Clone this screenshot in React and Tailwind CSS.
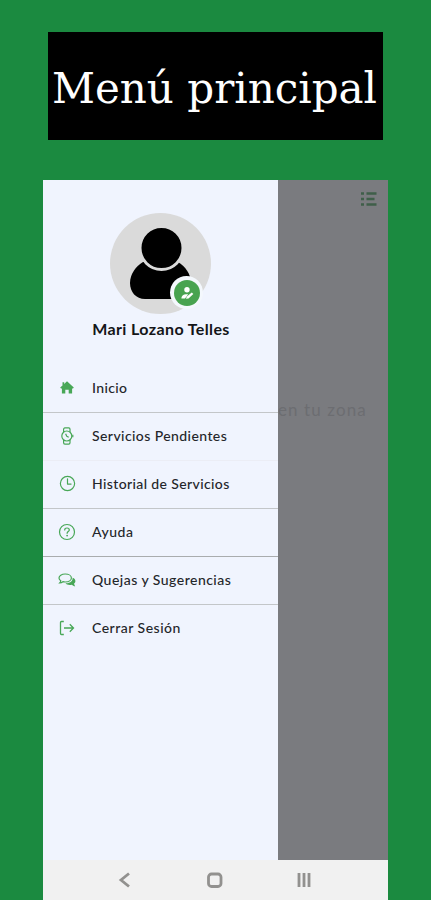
import { IoTimeOutline } from 'react-icons/io5'

const HomeIcon = () => (
  <svg viewBox="0 0 14 13" className="h-[13px] w-3.5" fill="currentColor">
    <path d="M7 .3 13.800 6.600 13 7.500h-.9v5H8.700V8.700H5.300v3.800H1.900v-5H1L.2 6.600 2.500 4.500V1.300h1.700v1.600z" />
  </svg>
)

const WatchIcon = () => (
  <svg viewBox="0 0 14 18" className="h-[18px] w-3.5" fill="none" stroke="currentColor" strokeWidth="1.2" strokeLinejoin="round">
    <circle cx="6.800" cy="9" r="5" />
    <path d="M3.600 5V2.300c0-.8.500-1.400 1.300-1.400h3.800c.8 0 1.300.6 1.300 1.400V5M3.600 13v2.700c0 .8.500 1.400 1.300 1.400h3.800c.8 0 1.300-.6 1.300-1.400V13M12.800 7.800v2.400" />
    <path d="M5.600 6.800 6.800 9.300l1.900 1" />
  </svg>
)

const HelpIcon = () => (
  <svg viewBox="0 0 18 18" className="size-[18px]" fill="none" stroke="currentColor" strokeWidth="1.2">
    <circle cx="9" cy="9" r="7.500" />
    <path d="M6.700 7c0-1.300 1-2 2.300-2s2.300.8 2.300 2c0 1.500-2.200 1.700-2.200 3.300" strokeLinecap="round" />
    <circle cx="9.100" cy="12.600" r=".9" fill="currentColor" stroke="none" />
  </svg>
)

const ChatIcon = () => (
  <svg viewBox="0 0 18 16" className="w-[18px] h-4" fill="none" stroke="currentColor" strokeWidth="1.2">
    <path d="M7.200 2c3.600 0 6.200 1.700 6.200 4s-2.600 4-6.200 4c-.8 0-1.600-.1-2.300-.3-.8.700-1.900 1.200-3.200 1.200.6-.6 1-1.300 1.100-2.100C1.600 8 1 7 1 6c0-2.300 2.600-4 6.200-4z" />
    <path fill="currentColor" stroke="none" d="M14.600 5.700c1.700.6 2.800 1.800 2.800 3.300 0 1-.5 1.900-1.300 2.500.1.900.5 1.900 1.100 2.700-1.400 0-2.600-.6-3.400-1.500-3 .6-5.400-.2-6.300-1.500 4.200.2 7.500-2 7.100-5.500z" />
  </svg>
)

const ExitIcon = () => (
  <svg viewBox="0 0 16 16" className="size-4" fill="none" stroke="currentColor" strokeWidth="1.3">
    <path d="M4.800 1.500H2.500q-1 0-1 1v11q0 1 1 1h2.300M5 8h9.500M10.800 4.300 14.500 8l-3.700 3.700" />
  </svg>
)

const items = [
  { label: 'Inicio', icon: <HomeIcon />, line: 'border-[#c3c6c9]', tracking: 'tracking-[0.35px]' },
  { label: 'Servicios Pendientes', icon: <WatchIcon />, line: 'border-[#ebedf5]', tracking: 'tracking-[0.42px]' },
  { label: 'Historial de Servicios', icon: <IoTimeOutline size={19} />, line: 'border-[#c3c6c9]', tracking: 'tracking-[0.38px]' },
  { label: 'Ayuda', icon: <HelpIcon />, line: 'border-[#a9acae]', tracking: 'tracking-[0.5px]' },
  { label: 'Quejas y Sugerencias', icon: <ChatIcon />, line: 'border-[#c3c6c9]', tracking: 'tracking-[0.48px]' },
  { label: 'Cerrar Sesión', icon: <ExitIcon />, line: 'border-transparent', tracking: 'tracking-[0.5px]' },
]

const Avatar = () => (
  <div className="relative size-[101px] rounded-full bg-[#dadada]">
    <svg viewBox="0 0 101 101" className="size-full">
      <path d="M33 49C26 53 20 61 20 70c0 9 6 16 15 16h31c9 0 15-7 15-16 0-9-6-17-13-21z" />
      <circle cx="51.500" cy="35" r="21.500" stroke="#dadada" strokeWidth="3" />
    </svg>
    <div className="absolute left-[60px] top-[63px] flex size-[33px] items-center justify-center rounded-full bg-[#f4f8fd]">
      <div className="flex size-[26px] items-center justify-center rounded-full bg-[#48a350] text-white">
        <svg viewBox="0 0 14 14" className="size-3.5" fill="currentColor">
          <circle cx="7" cy="3.800" r="2.700" />
          <path d="M1.300 12.200c.4-2.400 2.200-4 4.700-4h2.200L5 12.500H1.700z" />
          <path d="m6 12.800.8-2.300 5-4 1.500 1.500-4.800 4.400z" />
        </svg>
      </div>
    </div>
  </div>
)

const Drawer = () => (
  <aside className="w-[235px] bg-[#f0f4fe]">
    <div className="flex h-[185px] flex-col items-center pt-[33px]">
      <Avatar />
      <p className="mt-1 whitespace-nowrap pl-px text-[16px] font-bold leading-[22px] tracking-[0.38px] text-[#141518]">Mari Lozano Telles</p>
    </div>
    <ul>
      {items.map((item) => (
        <li key={item.label} className={`flex h-12 items-center border-b pb-0.5 ${item.line}`}>
          <span className="flex w-12 justify-center text-[#48a757]">{item.icon}</span>
          <span className={`whitespace-nowrap pb-px pl-px text-[14px] font-medium text-[#24262a] ${item.tracking}`}>{item.label}</span>
        </li>
      ))}
    </ul>
  </aside>
)

const NavBar = () => (
  <div className="flex h-10 items-center bg-[#f1f1f1] text-[#92918f]">
    <svg viewBox="0 0 345 40" className="h-10 w-[345px]" fill="none" stroke="currentColor">
      <path d="M86 13.500 78 20l8 6.500" strokeWidth="2.800" />
      <rect x="165.500" y="14" width="12.500" height="12.500" rx="3" strokeWidth="2.800" />
      <path d="M256 13v14M261 13v14M266 13v14" strokeWidth="2.800" />
    </svg>
  </div>
)

const App = () => {
  return (
    <div className="flex h-[900px] w-[431px] flex-col overflow-hidden bg-[#1b8a40] pt-8 font-['Lato',sans-serif]">
      <h1 className="ml-12 flex h-[108px] w-[335px] items-center justify-center whitespace-nowrap bg-black pr-0.5 pt-1 font-['DejaVu_Serif',serif] text-[42px] text-white">
        Menú principal
      </h1>
      <div className="ml-[43px] mt-10 w-[345px]">
        <div className="flex h-[680px]">
          <Drawer />
          <main className="relative flex-1 overflow-hidden bg-[#7a7b7f]">
            <svg viewBox="0 0 18 16" className="absolute left-[82px] top-[11px] h-4 w-[18px]" stroke="#3f5f49" strokeWidth="2.400">
              <path d="M1 2.500h3M6.500 2.500h10M1 8h3M6.500 8h8M1 13.500h3M6.500 13.500h10" />
            </svg>
            <p className="absolute left-0 top-[219px] whitespace-nowrap text-[17px] leading-[22px] tracking-[1.100px] text-[#6c6d71]">en tu zona</p>
          </main>
        </div>
        <NavBar />
      </div>
    </div>
  )
}

export default App
